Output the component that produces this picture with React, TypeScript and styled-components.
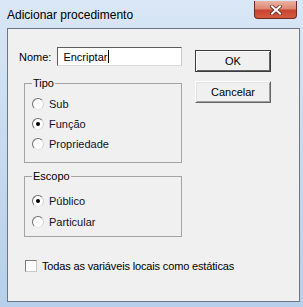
import React from 'react';
import styled, {createGlobalStyle} from 'styled-components';

const GlobalStyle = createGlobalStyle`
  html, body {
    margin: 0;
    padding: 0;
    background: #c9dcf0;
  }
`

const Window = styled.div`
  width: 303px;
  height: 307px;
  box-sizing: border-box;
  padding: 0 3px 5px 7px;
  display: flex;
  flex-direction: column;
  background: linear-gradient(180deg, #d9e7f6 0%, #c8dbf0 45%, #b7cfea 100%);
  font-family: "Liberation Sans", Arial, sans-serif;
`

const TitleBar = styled.div`
  height: 28px;
  display: flex;
  justify-content: space-between;
  align-items: flex-start;
`

const Title = styled.span`
  font-size: 12px;
  line-height: 14px;
  padding-top: 8px;
  color: #000;
`

const CloseButton = styled.div`
  width: 43px;
  height: 18px;
  margin-top: 1px;
  margin-right: 3px;
  box-sizing: border-box;
  border: 1px solid #6b2a22;
  border-top: none;
  border-radius: 0 0 4px 4px;
  background: linear-gradient(180deg, #eab2a3 0%, #dc8872 45%, #c8442e 55%, #d45a40 100%);
  display: flex;
  align-items: center;
  justify-content: center;
`

const Client = styled.div`
  flex: 1;
  border: 1px solid #6c7684;
  background: #f0f0f0;
  display: flex;
  flex-direction: column;
  padding: 18px 0 0 11px;
`

const Body = styled.div`
  display: flex;
  gap: 13px;
`

const LeftCol = styled.div`
  width: 163px;
  display: flex;
  flex-direction: column;
`

const RightCol = styled.div`
  display: flex;
  flex-direction: column;
  gap: 9px;
  padding-top: 3px;
`

const NameRow = styled.div`
  display: flex;
  align-items: center;
  gap: 6px;
  height: 19px;
`

const Label = styled.span`
  font-size: 11px;
  color: #000;
`

const TextBox = styled.div`
  width: 127px;
  height: 19px;
  box-sizing: border-box;
  background: #fff;
  border: 1px solid;
  border-color: #5d5d5d #c8c8c8 #d9d9d9 #5d5d5d;
  display: flex;
  align-items: center;
  padding-left: 5px;
  font-size: 11px;
  color: #000;
`

const Caret = styled.span`
  display: inline-block;
  width: 1px;
  height: 13px;
  background: #000;
  margin-left: 1px;
`

const Group = styled.fieldset<{ $top: number, $bottom: number, $mt: number }>`
  margin: ${p => p.$mt}px 0 0 5px;
  width: 158px;
  box-sizing: border-box;
  border: 1px solid #a3a3a3;
  border-radius: 0;
  padding: ${p => p.$top}px 0 ${p => p.$bottom}px 7px;
  display: flex;
  flex-direction: column;
`

const Legend = styled.legend`
  font-size: 11px;
  line-height: 13px;
  padding: 0 1px;
  color: #000;
`

const OptionRow = styled.div<{ $h: number }>`
  height: ${p => p.$h}px;
  display: flex;
  align-items: center;
  gap: 5px;
  font-size: 11px;
  color: #10102a;
`

const Radio = styled.span<{ $checked?: boolean }>`
  width: 12px;
  height: 12px;
  box-sizing: border-box;
  border-radius: 50%;
  border: 1px solid;
  border-color: #6b6b6b #d4d4d4 #e6e6e6 #6b6b6b;
  background: #fff;
  display: flex;
  align-items: center;
  justify-content: center;

  &::after {
    content: '';
    width: 4px;
    height: 4px;
    border-radius: 50%;
    background: ${p => p.$checked ? '#000' : 'transparent'};
  }
`

const CheckRow = styled.div`
  margin: 23px 0 0 6px;
  display: flex;
  align-items: center;
  gap: 5px;
  font-size: 11px;
  color: #000;
  white-space: nowrap;
  letter-spacing: -0.15px;
`

const CheckBox = styled.span`
  width: 12px;
  height: 12px;
  box-sizing: border-box;
  border: 1px solid;
  border-color: #7a7a7a #c9c9c9 #c9c9c9 #7a7a7a;
  background: #fff;
`

const Button = styled.div<{ $default?: boolean }>`
  width: 76px;
  height: 22px;
  box-sizing: border-box;
  display: flex;
  align-items: center;
  justify-content: center;
  font-size: 11px;
  color: #000;
  background: #f0f0f0;
  border: 1px solid;
  border-color: ${p => p.$default ? '#3c3c3c' : '#ffffff #646464 #646464 #ffffff'};
  box-shadow: ${p => p.$default
    ? 'inset 1px 1px 0 #ffffff, inset -1px -1px 0 #646464'
    : 'inset 1px 1px 0 #e3e3e3, inset -1px -1px 0 #a0a0a0'};
`

export default function App() {
    return (
        <>
            <GlobalStyle/>
            <Window>
                <TitleBar>
                    <Title>Adicionar procedimento</Title>
                    <CloseButton>
                        <svg width="12" height="10" viewBox="0 0 12 10">
                            <path d="M2 1.5 L10 8.5 M10 1.5 L2 8.5" stroke="#5a2a28" strokeWidth="3.6"
                                  strokeLinecap="square"/>
                            <path d="M2 1.5 L10 8.5 M10 1.5 L2 8.5" stroke="#ffffff" strokeWidth="2"
                                  strokeLinecap="square"/>
                        </svg>
                    </CloseButton>
                </TitleBar>
                <Client>
                    <Body>
                        <LeftCol>
                            <NameRow>
                                <Label>Nome:</Label>
                                <TextBox>Encriptar<Caret/></TextBox>
                            </NameRow>
                            <Group $mt={11} $top={4} $bottom={8}>
                                <Legend>Tipo</Legend>
                                <OptionRow $h={20}><Radio/>Sub</OptionRow>
                                <OptionRow $h={20}><Radio $checked/>Função</OptionRow>
                                <OptionRow $h={20}><Radio/>Propriedade</OptionRow>
                            </Group>
                            <Group $mt={7} $top={7} $bottom={4}>
                                <Legend>Escopo</Legend>
                                <OptionRow $h={21}><Radio $checked/>Público</OptionRow>
                                <OptionRow $h={21}><Radio/>Particular</OptionRow>
                            </Group>
                        </LeftCol>
                        <RightCol>
                            <Button $default>OK</Button>
                            <Button>Cancelar</Button>
                        </RightCol>
                    </Body>
                    <CheckRow>
                        <CheckBox/>
                        Todas as variáveis locais como estáticas
                    </CheckRow>
                </Client>
            </Window>
        </>
    );
}
